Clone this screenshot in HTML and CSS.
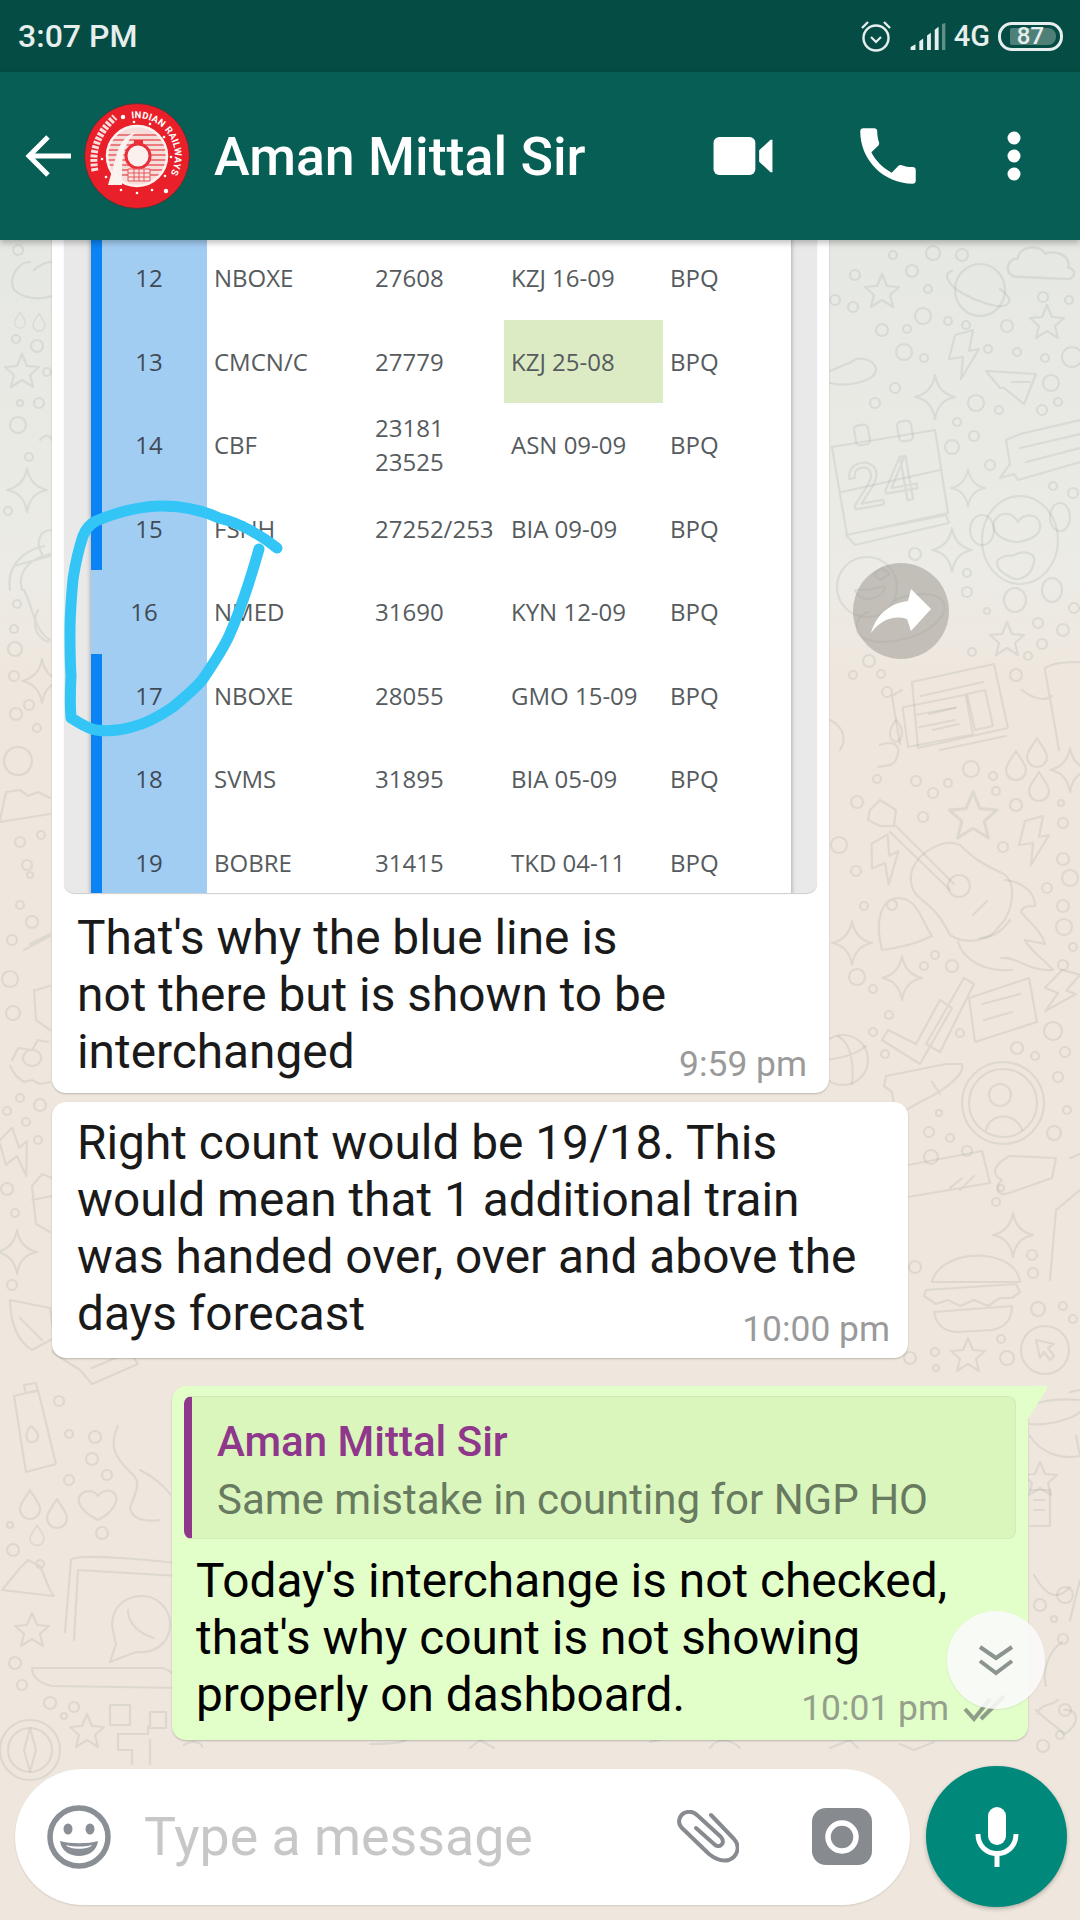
FILE: index.html
```html
<!DOCTYPE html>
<html lang="en">
<head>
<meta charset="utf-8">
<title>Aman Mittal Sir</title>
<link rel="stylesheet" href="styles.css">
</head>
<body>
<div class="screen">
  <div class="statusbar">
    <span class="clock">3:07 PM</span>
    <div class="status-icons">
      <svg class="ic-alarm" viewBox="0 0 34 34"><circle cx="17" cy="19" r="12.500" fill="none" stroke="#e6efed" stroke-width="2.400"/><path d="M12 18l5 5 5-5" fill="none" stroke="#e6efed" stroke-width="2.200"/><path d="M3 9l6-6M31 9l-6-6" stroke="#e6efed" stroke-width="2.400"/></svg>
      <svg class="ic-signal" viewBox="0 0 38 28"><path d="M1 28v-3l5-3v6zM10 28V19l4-3v12zM18 28V13l4-3v18zM26 28V7l4-3v24z" fill="#e6efed"/><path d="M33.500 28V1l3.500-1v28z" fill="#5f8f88"/></svg>
      <span class="net">4G</span>
      <div class="battery"><div class="battery-fill"></div><span class="battery-num">87</span></div>
    </div>
  </div>
  <header class="appbar">
    <svg class="ic-back" viewBox="0 0 48 48"><path d="M47 24H6M24 5L5 24l19 19" fill="none" stroke="#fff" stroke-width="5"/></svg>
    <svg class="avatar" viewBox="0 0 106 106">
      <circle cx="53" cy="53" r="52.500" fill="#e9202a" stroke="#3a3a3a" stroke-width="0.800"/>
      <circle cx="53" cy="53" r="30" fill="#f6dfda"/>
      <g stroke="#ea5c62" stroke-width="1.300"><path d="M33 32h40M28 37h50M25 42h56M24 47h58M24 52h58M24 57h58M25 62h56M27 67h52M31 72h44"/></g>
      <circle cx="53" cy="53" r="30" fill="none" stroke="#fbf3ef" stroke-width="2.500"/>
      <path d="M52 29C42 32 36 40 33 50L24 82 38 82 38 66C38 50 42 38 52 29Z" fill="#fbf3ef"/>
      <path d="M50 37h9v5h-9z" fill="#e9303a"/>
      <circle cx="54" cy="53" r="12" fill="#fbf0ee" stroke="#e9303a" stroke-width="3"/>
      <path d="M44 66h22v12H44zM44 70h22M44 74h22M50 66v12M55 66v12M60 66v12" fill="#f6e4e0" stroke="#e9545a" stroke-width="1"/>
      <path id="arc" d="M47.700 15.400A38 38 0 0 1 77.400 82.100" fill="none"/>
      <text class="avatar-text"><textPath href="#arc" textLength="83">INDIAN RAILWAYS</textPath></text>
      <g fill="#fff"><circle cx="39" cy="14" r="2.200"/><circle cx="82" cy="88" r="2.200"/><circle cx="53" cy="90" r="1.300"/><circle cx="37" cy="87" r="1.300"/><circle cx="68" cy="87" r="1.300"/><circle cx="22" cy="74" r="1.300"/><circle cx="18" cy="56" r="1.300"/><circle cx="50" cy="19" r="1.300"/><circle cx="66" cy="21" r="1.300"/><circle cx="80" cy="34" r="1.300"/><circle cx="87" cy="54" r="1.300"/><circle cx="81" cy="73" r="1.300"/></g>
      <path d="M11 68Q5 38 31 14" fill="none" stroke="#f8dfdd" stroke-width="7" stroke-dasharray="3 1.500"/>
    </svg>
    <h1 class="title">Aman Mittal Sir</h1>
    <div class="actions">
      <svg class="ic-video" viewBox="0 0 62 40"><rect x="0" y="0" width="44" height="40" rx="6" fill="#fff"/><path d="M48 14L60 3h2v34h-2L48 26z" fill="#fff"/></svg>
      <svg class="ic-call" viewBox="0 0 24 24"><path d="M6.600 10.800c1.400 2.800 3.800 5.100 6.600 6.600l2.200-2.200c.3-.3.700-.4 1-.2 1.100.4 2.300.6 3.600.6.600 0 1 .4 1 1V20c0 .6-.4 1-1 1C10.600 21 3 13.400 3 4c0-.6.400-1 1-1h3.500c.6 0 1 .4 1 1 0 1.300.2 2.500.6 3.600.1.300 0 .7-.2 1z" fill="#fff"/></svg>
      <svg class="ic-more" viewBox="0 0 14 50"><circle cx="7" cy="7" r="6.500" fill="#fff"/><circle cx="7" cy="25" r="6.500" fill="#fff"/><circle cx="7" cy="43" r="6.500" fill="#fff"/></svg>
    </div>
  </header>
  <main class="chat">
    <svg class="wallpaper" viewBox="0 240 1080 1680">
      <defs>
        <path id="s5" d="M0-18L5-6 17-5 8 3 11 15 0 8-11 15-8 3-17-5-5-6Z"/>
        <path id="s4" d="M0-22Q3-4 20 0 3 3 0 22-3 3-20 0-3-4 0-22Z"/>
        <path id="bolt" d="M-8-22L10-27 6-6 16-8-2 22 0 0-14 2Z"/>
        <path id="drop" d="M0-14C6-4 10 0 10 5A10 10 0 0 1-10 5C-10 0-6-4 0-14Z"/>
        <path id="cloud" d="M-24 12C-34 10-32-4-22-4-20-16-2-16 2-8 12-12 24-6 22 4 30 6 28 14 20 14Z"/>
        <g id="note"><path d="M-36-14L34-28 42 16-30 30Z"/><path d="M-20-6L24-14M-18 8L22 0"/></g>
      </defs>
      <g class="doodle">
        <ellipse cx="980" cy="290" rx="25" ry="26"/><path d="M952 271c-10 2-4 14 10 22s36 16 44 12c8-4 0-12-6-16"/>
        <use href="#s5" x="882" y="292"/><use href="#s5" x="1047" y="323"/>
        <use href="#cloud" transform="translate(1043 263) scale(1.150)"/>
        <path d="M830 371c8-3 14-7 20-8 8-8 24-4 26 6 0 8-10 12-20 14-8 2-18 2-26 0"/>
        <use href="#bolt" x="963" y="357"/>
        <path d="M986 371l50 3-12 30-20-16-4 0zM1012 382l18 0"/>
        <use href="#s4" x="935" y="397"/><use href="#s4" x="968" y="488" transform="translate(968 488) scale(.85) translate(-968 -488)"/><use href="#s4" x="952" y="550"/>
        <path d="M832 447l103-17 13 83-101 22ZM846 535l100-20 3 8-94 22zM842 492l98-22"/>
        <rect x="855" y="425" width="14" height="20" rx="4" transform="rotate(-10 862 435)"/><rect x="898" y="421" width="14" height="20" rx="4" transform="rotate(-10 905 431)"/>
        <text class="doodle-num" x="852" y="510" transform="rotate(-10 852 510)">24</text>
        <path d="M1080 420l-60 14-14 6 4 24-10 14 14-4 4 6 62-18M1020 448l60-14M1026 462l54-14"/>
        <ellipse cx="1020" cy="540" rx="38" ry="44"/><ellipse cx="982" cy="530" rx="12" ry="15"/><ellipse cx="1060" cy="517" rx="10" ry="14"/>
        <path d="M994 522c6-12 18-10 24 0 6-10 20-8 22 2 2 10-8 16-22 18-12 0-28-8-24-20z"/>
        <path d="M998 560c8-8 16-2 18-6 10-4 20 0 18 8-2 12-12 20-22 16-8-4-18-10-14-18z"/>
        <ellipse cx="1015" cy="600" rx="11" ry="12"/><ellipse cx="1052" cy="590" rx="10" ry="12"/>
        <circle cx="867" cy="587" r="30"/><path d="M880 580l-6-6 8-6 8 6zM855 590c10 0 24-2 30-4 0 12-24 20-30 4z"/>
        <path d="M895 600c20-8 44-8 48 2 8 14-18 34-44 38-26 6-44-2-42-14 0-8 8-14 12-14M912 622l10-6M900 610l10-4"/>
        <use href="#s5" x="1007" y="640"/>
        <path d="M1045 668c10-6 24-6 35-6M1045 670l14 80M1022 690c10 8 22 12 30 6"/>
        <path d="M912 682l82-18 14 64-90 20zM921 696l62-14M929 714l26-6M933 730l26-6M967 694l18-4 8 36-18 4zM940 750l66-14"/>
        <path d="M902 690l-10 6 8 48"/>
        <path d="M830 720c12 6 18 18 10 30M880 745c10-4 20-2 18 8-2 14-10 12-20 14M896 720c-8 10-8 20 0 22 8-2 8-14 0-22z"/>
        <use href="#drop" x="1016" y="765"/><use href="#drop" x="1037" y="752"/><use href="#drop" x="1039" y="786"/>
        <use href="#note" transform="translate(935 720) scale(.9)"/>
        <use href="#s4" x="1070" y="770"/>
        <path d="M870 810l10-10 16 10-2 16-14 0-12-6zM896 826l58 58M890 832l60 58"/>
        <path d="M912 870C920 850 945 838 960 845 975 860 985 865 1000 872 1020 880 1012 915 1000 925 990 942 965 945 950 935 935 905 925 905 915 893 910 885 910 877 912 870Z"/>
        <circle cx="959" cy="886" r="11"/><path d="M973 915l14-14"/>
        <path d="M1005 880c20 2 30 14 30 26-8 0-12 0-14 6 8 10 20 18 24 32l-20-4c4 10 20 20 28 30-24 2-36-14-52-12M1010 920c-10 14-20 18-30 18M958 942c6 20 30 30 54 28"/>
        <use href="#s5" x="973" y="817" transform="translate(973 817) scale(1.400) translate(-973 -817)"/>
        <use href="#bolt" x="1033" y="843"/><use href="#bolt" x="885" y="863" transform="rotate(-15 885 863)"/><use href="#bolt" x="1058" y="993" transform="rotate(30 1058 993)"/>
        <path d="M882 950c-8-30 0-52 16-52 20 0 24 24 34 38-16 8-34 12-50 14zM892 900a5 5 0 1 0 .1 0"/>
        <use href="#s4" x="852" y="943"/><use href="#s4" x="902" y="978"/>
        <path d="M888 1030l28 14 24-44 12 8-32 56-38-24ZM926 1044l14 8 34-68-10-6Z"/>
        <path d="M969 998l60-20 8 44-62 20ZM982 1004l38-10M984 1020l28-8"/>
        <circle cx="843" cy="1060" r="25"/><path d="M820 1060c14 0 34-4 46-14M838 1036c14 8 16 30 14 48"/>
        <path d="M886 1076l60-12 16 0c4 12-24 30-42 38l-24 14-4-24-8-6zM932 1082l8 12"/>
        <circle cx="1003" cy="1103" r="41"/><circle cx="1003" cy="1103" r="34"/><circle cx="1000" cy="1095" r="11"/><path d="M986 1130c4-18 30-18 36 0"/>
        <path d="M908 1165l74-14 8 32-82 14M950 1188l12-10M960 1190l14-14"/>
        <path d="M1010 1156c-16 8-20 18-8 24-10 8-4 18 10 12l40-14 4-20z"/><path d="M1070 1158l10-4M1050 1280l6-70 24-20"/>
        <use href="#s4" x="1013" y="1235"/>
        <path d="M932 1282c4-18 28-28 52-26 22 2 34 12 36 26zM926 1290l90-6 4 8-8 6-12 0-12 8-14-6-14 6-12-6-12 4-12-8zM934 1312l78-6c0 14-8 22-20 24l-34 2c-14 0-22-8-24-20z"/>
        <use href="#s5" x="968" y="1356"/>
        <circle cx="1045" cy="1350" r="24"/><path d="M1036 1340l18 4-6 4 6 8-4 4-6-8-4 6z"/>
        <path d="M1030 1406c20-10 44-6 50-6M1030 1424c20 2 44-6 50-12M1030 1436c10 16 30 24 50 20l-4-20M1070 1392l10-2"/>
        <path d="M1030 1490l20 0 0 36-20 0M1034 1500l10 0M1034 1510l10 0"/>
        <use href="#s5" x="1040" y="1480"/>
        <path d="M1062 1642c-14 10-20 30-16 44M1058 1700c-6 6-20 4-20 14M1036 1710c10 10 20 16 28 24 16-8 16-26 0-24"/>
        <path d="M1034 1575c8 14 20 30 36 12M1080 1580l-10 40"/>
        <path d="M30 262C18 262 8 278 14 290 30 304 52 296 52 296M52 262c-10 0-18 8-18 8"/>
        <use href="#drop" x="20" y="320" transform="translate(20 320) scale(.55) translate(-20 -320)"/><use href="#drop" x="39" y="322" transform="translate(39 322) scale(.6) translate(-39 -322)"/>
        <use href="#s5" x="22" y="372"/>
        <path d="M40 440c8-10 12 0 12 0"/>
        <use href="#s4" x="27" y="490"/>
        <path d="M10 590c-4-24 14-40 34-44M14 566l36-10M22 590c-4-14 2-30 28-36M52 530c-14 0-16 14-10 24M24 590c10 20 10 40 26 50M38 610c-6 12-4 26 10 32"/>
        <use href="#s4" x="42" y="681"/>
        <circle cx="18" cy="761" r="14"/><path d="M0 820l6-28 14-2 8 6 10-4 12 6M0 822l50-8"/>
        <path d="M24 950l26-14M30 944l20-10"/><path d="M36 990l14-4M34 990l2 30 14 10"/>
        <path d="M12 1060l6-12 14 2 6-10 10 2M10 1066l6 10 8 6 8-2 8 4 10-2M32 1050a9 8 0 1 0 .1 0"/>
        <use href="#bolt" x="17" y="1156" transform="rotate(-30 17 1156)"/>
        <path d="M32 1186l10-12 10 4M32 1186l4 38 14 8M32 1200l20-4"/>
        <use href="#s4" x="17" y="1252"/>
        <path d="M10 1300l40 8 4 30-22 12c-14-8-22-28-22-50zM20 1318l22 22"/>
        <path d="M52 1352l58-28 28 40-46 20-12-14zM84 1354l30-14M92 1368l28-12"/>
        <path d="M14 1396l24-6 18 74-30 8zM24 1385l12-2 2 8-12 2zM31 1426c-8 8-4 18 2 16 8-2 6-10-2-16z"/>
        <use href="#drop" x="30" y="1504"/><use href="#drop" x="57" y="1513"/><use href="#drop" x="37" y="1535" transform="translate(37 1535) scale(.7) translate(-37 -1535)"/>
        <path d="M98 1520c-20-10-24-22-14-28 6-2 12 0 14 4 4-6 14-8 18 0 2 8-6 18-18 24z"/>
        <path d="M118 1426c-10 20-2 32 12 46 14 10 4 22 0 36 2 12 16 14 30 12M140 1470c20 10 30 24 30 24"/>
        <path d="M2 1590l18-22 8-8 12 6 10 24 4 6zM40 1560a4 4 0 1 0 .1 0"/>
        <use href="#s5" x="32" y="1631"/>
        <path d="M65 1632l6-72c4-8 100 2 110 4M74 1640l4-70 100 6M32 1668l130 0c10 2 20 14 20 20l-130-2c-10-2-20-8-20-18z"/>
        <path d="M112 1626c0-22 16-30 30-30s30 12 28 32c-2 16-16 26-34 24l-26 10 6-18z"/><path d="M128 1610c0 14 12 24 26 28"/>
        <circle cx="30" cy="1750" r="30"/><circle cx="30" cy="1750" r="22"/><path d="M30 1728l6 22-6 22-6-22z"/>
        <use href="#s5" x="87" y="1732"/>
        <path d="M110 1705h20v20h-20zM150 1712h16v16h-16zM118 1750v-16h30v-8M118 1750h14v14M150 1740v24"/>
        <path d="M184 1745c8-6 18-2 18 2M370 1744c10 0 30 0 36-4M470 1748l10-8 14 8M650 1742l34-8M710 1748c6-10 20-10 30 0M830 1748l20-8 8 8M900 1744l14 6 20-8"/>
      </g>
      <g class="dots">
        <circle cx="893" cy="255" r="4"/><circle cx="933" cy="253" r="7"/><circle cx="962" cy="255" r="6"/><circle cx="855" cy="275" r="5"/><circle cx="912" cy="271" r="6"/><circle cx="928" cy="289" r="4"/><circle cx="835" cy="300" r="5"/><circle cx="853" cy="307" r="5"/><circle cx="923" cy="316" r="8"/><circle cx="948" cy="321" r="4"/><circle cx="966" cy="325" r="4"/><circle cx="882" cy="330" r="6"/><circle cx="907" cy="329" r="4"/><circle cx="1007" cy="326" r="6"/><circle cx="1043" cy="297" r="5"/><circle cx="1069" cy="300" r="4"/><circle cx="988" cy="349" r="4"/><circle cx="1017" cy="352" r="4"/><circle cx="1045" cy="358" r="4"/><circle cx="904" cy="352" r="8"/><circle cx="924" cy="358" r="4"/><circle cx="1072" cy="357" r="10"/><circle cx="1051" cy="383" r="8"/><circle cx="895" cy="388" r="5"/><circle cx="875" cy="403" r="5"/><circle cx="976" cy="403" r="8"/><circle cx="999" cy="410" r="4"/><circle cx="1058" cy="402" r="4"/><circle cx="1042" cy="410" r="5"/><circle cx="957" cy="422" r="4"/><circle cx="974" cy="436" r="5"/><circle cx="952" cy="447" r="7"/><circle cx="990" cy="465" r="5"/><circle cx="1053" cy="486" r="4"/><circle cx="1073" cy="493" r="5"/><circle cx="915" cy="554" r="6"/><circle cx="967" cy="573" r="4"/><circle cx="967" cy="592" r="5"/><circle cx="987" cy="611" r="3"/><circle cx="1074" cy="608" r="5"/><circle cx="1038" cy="623" r="5"/><circle cx="1063" cy="630" r="6"/><circle cx="1042" cy="644" r="5"/><circle cx="1028" cy="656" r="4"/><circle cx="972" cy="652" r="4"/><circle cx="1016" cy="675" r="6"/><circle cx="869" cy="661" r="6"/><circle cx="853" cy="675" r="4"/><circle cx="881" cy="674" r="4"/><circle cx="887" cy="692" r="5"/>
        <circle cx="877" cy="779" r="4"/><circle cx="916" cy="781" r="5"/><circle cx="948" cy="783" r="4"/><circle cx="971" cy="769" r="8"/><circle cx="993" cy="776" r="4"/><circle cx="996" cy="791" r="4"/><circle cx="933" cy="793" r="5"/><circle cx="857" cy="802" r="6"/><circle cx="1016" cy="805" r="6"/><circle cx="1061" cy="803" r="3"/><circle cx="923" cy="817" r="5"/><circle cx="1063" cy="823" r="5"/><circle cx="1003" cy="847" r="5"/><circle cx="839" cy="845" r="8"/><circle cx="856" cy="871" r="5"/><circle cx="1063" cy="859" r="6"/><circle cx="1070" cy="878" r="8"/><circle cx="1047" cy="888" r="5"/><circle cx="864" cy="906" r="4"/><circle cx="1063" cy="906" r="6"/><circle cx="1064" cy="927" r="8"/><circle cx="1073" cy="947" r="4"/><circle cx="1063" cy="965" r="5"/><circle cx="935" cy="955" r="4"/><circle cx="924" cy="966" r="4"/><circle cx="952" cy="966" r="6"/><circle cx="857" cy="977" r="8"/><circle cx="873" cy="989" r="4"/><circle cx="889" cy="1015" r="4"/><circle cx="873" cy="1032" r="4"/><circle cx="960" cy="1033" r="4"/><circle cx="1053" cy="1031" r="9"/><circle cx="885" cy="1054" r="4"/><circle cx="1017" cy="1048" r="6"/><circle cx="1035" cy="1056" r="4"/><circle cx="1065" cy="1052" r="5"/><circle cx="1058" cy="1077" r="5"/><circle cx="1067" cy="1110" r="4"/><circle cx="939" cy="1113" r="3"/><circle cx="929" cy="1132" r="5"/><circle cx="1054" cy="1133" r="7"/>
        <circle cx="950" cy="1138" r="4"/><circle cx="931" cy="1157" r="7"/><circle cx="967" cy="1151" r="5"/><circle cx="1001" cy="1188" r="3"/><circle cx="996" cy="1202" r="4"/><circle cx="915" cy="1267" r="6"/><circle cx="1032" cy="1255" r="5"/><circle cx="1033" cy="1273" r="5"/><circle cx="1038" cy="1309" r="7"/><circle cx="1063" cy="1306" r="4"/><circle cx="1073" cy="1319" r="4"/><circle cx="1001" cy="1339" r="4"/><circle cx="1007" cy="1358" r="7"/><circle cx="935" cy="1352" r="4"/><circle cx="936" cy="1368" r="3"/><circle cx="910" cy="1358" r="6"/><circle cx="1040" cy="1605" r="6"/><circle cx="1065" cy="1595" r="8"/><circle cx="1054" cy="1619" r="3"/><circle cx="1063" cy="1639" r="5"/><circle cx="1065" cy="1710" r="6"/><circle cx="1060" cy="1735" r="4"/><circle cx="1043" cy="1746" r="6"/>
        <circle cx="18" cy="250" r="5"/><circle cx="16" cy="339" r="4"/><circle cx="37" cy="346" r="6"/><circle cx="47" cy="372" r="4"/><circle cx="20" cy="403" r="3"/><circle cx="39" cy="403" r="5"/><circle cx="18" cy="425" r="8"/><circle cx="29" cy="457" r="4"/><circle cx="8" cy="511" r="4"/><circle cx="17" cy="604" r="4"/><circle cx="14" cy="629" r="4"/><circle cx="15" cy="649" r="7"/><circle cx="14" cy="676" r="5"/><circle cx="16" cy="714" r="6"/><circle cx="29" cy="705" r="5"/><circle cx="37" cy="728" r="4"/><circle cx="20" cy="842" r="5"/><circle cx="41" cy="835" r="4"/><circle cx="27" cy="865" r="5"/><circle cx="30" cy="875" r="3"/><circle cx="20" cy="905" r="4"/><circle cx="32" cy="922" r="6"/><circle cx="12" cy="940" r="5"/><circle cx="10" cy="979" r="8"/><circle cx="13" cy="1013" r="7"/>
        <circle cx="7" cy="1111" r="4"/><circle cx="20" cy="1098" r="4"/><circle cx="40" cy="1105" r="6"/><circle cx="26" cy="1122" r="4"/><circle cx="38" cy="1140" r="4"/><circle cx="7" cy="1189" r="6"/><circle cx="15" cy="1213" r="4"/><circle cx="12" cy="1285" r="5"/><circle cx="59" cy="1401" r="5"/><circle cx="69" cy="1434" r="4"/><circle cx="95" cy="1437" r="6"/><circle cx="92" cy="1459" r="6"/><circle cx="107" cy="1475" r="5"/><circle cx="69" cy="1480" r="5"/><circle cx="10" cy="1525" r="3"/><circle cx="13" cy="1550" r="6"/><circle cx="102" cy="1533" r="6"/><circle cx="22" cy="1685" r="5"/><circle cx="15" cy="1663" r="6"/><circle cx="50" cy="1703" r="6"/><circle cx="64" cy="1716" r="3"/><circle cx="74" cy="1707" r="5"/>
      </g>
    </svg>
    <div class="thread">
      <article class="bubble in bubble-image">
        <div class="shot">
          <div class="shot-page">
            <div class="row"><span class="num">12</span><span>NBOXE</span><span>27608</span><span>KZJ 16-09</span><span>BPQ</span></div>
            <div class="row"><span class="num">13</span><span>CMCN/C</span><span>27779</span><span class="hl">KZJ 25-08</span><span>BPQ</span></div>
            <div class="row"><span class="num">14</span><span>CBF</span><span class="two">23181<br>23525</span><span>ASN 09-09</span><span>BPQ</span></div>
            <div class="row"><span class="num">15</span><span>FSNH</span><span>27252/253</span><span>BIA 09-09</span><span>BPQ</span></div>
            <div class="row gap"><span class="num">16</span><span>NMED</span><span>31690</span><span>KYN 12-09</span><span>BPQ</span></div>
            <div class="row"><span class="num">17</span><span>NBOXE</span><span>28055</span><span>GMO 15-09</span><span>BPQ</span></div>
            <div class="row"><span class="num">18</span><span>SVMS</span><span>31895</span><span>BIA 05-09</span><span>BPQ</span></div>
            <div class="row"><span class="num">19</span><span>BOBRE</span><span>31415</span><span>TKD 04-11</span><span>BPQ</span></div>
          </div>
          <svg class="ink" viewBox="64 392 400 500"><path d="M277 547C262 535 240 522 219 517 200 508 180 505 162 505 140 505 115 512 96 520 88 524 85 530 83 535 78 550 75 565 73 578 71 600 70 615 70 630 70 650 70 660 71 674 70 695 70 705 71 717 80 722 88 728 96 729 110 731 122 729 132 726 148 722 160 715 173 706 185 696 195 688 203 678 215 660 222 650 229 635 240 610 250 580 259 548" fill="none" stroke="#34c5f7" stroke-width="11" stroke-linecap="round" stroke-linejoin="round"/></svg>
        </div>
        <p class="msg">That's why the blue line is<br>not there but is shown to be<br>interchanged</p>
        <time class="stamp">9:59 pm</time>
      </article>
      <article class="bubble in bubble-two">
        <p class="msg">Right count would be 19/18. This<br>would mean that 1 additional train<br>was handed over, over and above the<br>days forecast</p>
        <time class="stamp">10:00 pm</time>
      </article>
      <article class="bubble out">
        <div class="quote">
          <div class="quote-name">Aman Mittal Sir</div>
          <div class="quote-text">Same mistake in counting for NGP HO</div>
        </div>
        <p class="msg msg-out">Today's interchange is not checked,<br>that's why count is not showing<br>properly on dashboard.</p>
        <time class="stamp stamp-out">10:01 pm <svg class="ticks" viewBox="0 0 44 28"><path d="M2 15l9 10L27 5M18 25L41 2" fill="none" stroke="#8f9c88" stroke-width="4"/></svg></time>
        <svg class="tail" viewBox="0 0 20 33"><path d="M0 0H17Q21 0 19 3L0 33z" fill="#e2fec9"/></svg>
      </article>
    </div>
    <div class="forward"><svg viewBox="0 0 60 44"><path d="M40 0L60 20 40 42 36 30C24 26 10 30 0 44 6 24 20 14 37 12Z" fill="#fff"/></svg></div>
    <div class="jump"><svg viewBox="0 0 36 34"><path d="M2 4l16 11L34 4M2 18l16 12 16-12" fill="none" stroke="#8c9490" stroke-width="4"/></svg></div>
    <div class="composer">
      <div class="inputbar">
        <svg class="ic-emoji" viewBox="0 0 64 64"><circle cx="32" cy="32" r="29" fill="none" stroke="#8a8f96" stroke-width="5.500"/><ellipse cx="21" cy="24" rx="4.500" ry="5.500" fill="#8a8f96"/><ellipse cx="43" cy="24" rx="4.500" ry="5.500" fill="#8a8f96"/><path d="M13 36c10 3 28 3 38 0-2 20-36 20-38 0z" fill="#8a8f96"/><path d="M19 40c8 2 18 2 26 0-3 5-23 5-26 0z" fill="#fff"/></svg>
        <span class="placeholder">Type a message</span>
        <svg class="ic-clip" viewBox="0 0 62 53"><path d="M34 5L57 29C64 37 60 47 52 50 44 52 37 48 32 44L5 18C0 13 2 6 7 3 12 1 17 2 20 5L44 27C47 31 46 34 44 35 42 37 39 36 37 34L19 18" fill="none" stroke="#878b90" stroke-width="4" stroke-linecap="round" stroke-linejoin="round"/></svg>
        <svg class="ic-cam" viewBox="0 0 60 57"><rect width="60" height="57" rx="14" fill="#878b90"/><circle cx="30" cy="29" r="14" fill="none" stroke="#fff" stroke-width="5.500"/></svg>
      </div>
      <button class="mic" type="button"><svg viewBox="0 0 44 60"><rect x="13" y="0" width="18" height="38" rx="9" fill="#fff"/><path d="M3 27c0 26 38 26 38 0" fill="none" stroke="#fff" stroke-width="5"/><rect x="19.500" y="44" width="5" height="16" fill="#fff"/></svg></button>
    </div>
  </main>
</div>
</body>
</html>
```
FILE: styles.css
```css
* { box-sizing: border-box; }
html, body { margin: 0; padding: 0; }
body { width: 1080px; height: 1920px; overflow: hidden; font-family: Roboto, "Noto Sans", sans-serif; background: #efe7dd; }
.screen { width: 1080px; height: 1920px; display: flex; flex-direction: column; overflow: hidden; }
.statusbar { height: 72px; flex: none; background: #054d44; display: flex; align-items: center; justify-content: space-between; padding: 0 17px 0 18px; color: #e6efed; }
.clock { font-size: 32px; font-weight: 500; }
.status-icons { display: flex; align-items: center; }
.ic-alarm { width: 34px; height: 34px; }
.ic-signal { width: 38px; height: 27px; margin-left: 16px; }
.net { font-size: 29px; font-weight: 500; margin-left: 7px; }
.battery { width: 65px; height: 29px; border: 3px solid #e6efed; border-radius: 14px; position: relative; display: flex; align-items: center; justify-content: center; padding: 3px; margin-left: 8px; }
.battery-fill { position: absolute; left: 9px; top: 3px; bottom: 3px; width: 46px; border-radius: 2px 8px 8px 2px; background: #4f8078; }
.battery-num { position: relative; font-size: 24px; font-weight: 500; }
.appbar { height: 168px; flex: none; background: #075e55; display: flex; align-items: center; position: relative; z-index: 3; box-shadow: 0 3px 6px rgba(0,0,0,.25); padding: 0 0 0 24px; }
.ic-back { width: 48px; height: 48px; flex: none; }
.avatar { width: 106px; height: 106px; flex: none; margin-left: 12px; }
.avatar-text { font: 700 9.500px Roboto, sans-serif; fill: #fff; }
.title { margin: 0 0 0 24px; font-size: 53.700px; font-weight: 500; color: #fff; white-space: nowrap; flex: 1; }
.actions { display: flex; align-items: center; padding-right: 59px; }
.ic-video { width: 62px; height: 38px; }
.ic-call { width: 74px; height: 74px; margin-left: 77px; }
.ic-more { width: 14px; height: 50px; margin-left: 82px; }
.chat { flex: 1; position: relative; overflow: hidden; background: linear-gradient(180deg, #e6e8e3 0, #ecebe5 20%, #efe7de 26%, #efe7dd 100%); }
.wallpaper { position: absolute; left: 0; top: 0; width: 1080px; height: 1680px; }
.doodle, .dots { fill: none; stroke: rgba(150,160,155,.2); stroke-width: 2.200; stroke-linejoin: round; stroke-linecap: round; }
.doodle-num { font: 400 62px Roboto, sans-serif; }
.thread { position: absolute; left: 0; right: 0; bottom: 180px; display: flex; flex-direction: column; align-items: flex-start; gap: 9px; }
.bubble { position: relative; background: #fff; border-radius: 14px; box-shadow: 0 1px 2px rgba(0,0,0,.22); margin-left: 52px; }
.bubble-image { width: 777px; padding: 0 12px 0; height: 900px; display: flex; flex-direction: column; justify-content: flex-end; }
.bubble-two { width: 856px; height: 256px; padding: 13px 25px; }
.msg { margin: 0; font-size: 47.800px; line-height: 57px; color: #1a1a1a; white-space: nowrap; }
.bubble-image .msg { padding: 17px 13px 12px; }
.stamp { position: absolute; right: 22px; bottom: 8px; color: #9a9a9a; font-size: 35.400px; white-space: nowrap; display: flex; align-items: center; }
.bubble-two .stamp { right: 18px; }
.shot { position: relative; flex: 1; min-height: 0; overflow: hidden; border-radius: 0 0 10px 10px; background: #e9e9e9; box-shadow: 0 1px 1px rgba(0,0,0,.2); display: flex; flex-direction: column; justify-content: flex-end; }
.shot-page { width: 700px; margin-left: 27px; margin-bottom: -11px; background: #fff; font-family: "Open Sans", sans-serif; font-size: 24px; color: #565b5e; box-shadow: 0 0 5px rgba(0,0,0,.35); }
.row { display: grid; grid-template-columns: 116px 161px 136px 159px 1fr; height: 83.500px; align-items: center; background: linear-gradient(90deg, #0a84f5 0 11px, #a2cdf3 11px 116px, transparent 116px); }
.row.gap { background: linear-gradient(90deg, #a2cdf3 0 116px, transparent 116px); }
.row > span { padding-left: 7px; white-space: nowrap; }
.row > .num { padding-left: 0; padding-right: 0; text-align: center; color: #3f4a55; }
.row.gap > .num { padding-right: 10px; }
.hl { background: #dcebc4; align-self: stretch; display: flex; align-items: center; }
.two { line-height: 34px; }
.ink { position: absolute; left: 0; bottom: 0; width: 400px; height: 500px; }
.out { background: #e2fec9; margin-left: 172px; width: 856px; height: 354px; padding: 10px 12px 0 12px; border-radius: 14px 0 14px 14px; margin-top: 19px; }
.tail { position: absolute; right: -20px; top: 0; width: 20px; height: 33px; }
.quote { height: 143px; border-radius: 8px; background: #daf6bc; border: 1px solid #d2ecb6; border-left: 8px solid #8e378b; padding: 22px 25px; }
.quote-name { font-size: 42px; line-height: 46px; font-weight: 500; color: #8e378b; }
.quote-text { font-size: 42px; line-height: 46px; margin-top: 12px; color: #687a5f; white-space: nowrap; }
.msg-out { color: #000; padding: 14px 12px; }
.stamp-out { color: #95a08c; right: 21px; bottom: 11px; gap: 14px; }
.ticks { width: 44px; height: 28px; }
.forward { position: absolute; left: 853px; top: 323px; width: 96px; height: 96px; border-radius: 50%; background: rgba(160,155,150,.55); display: flex; align-items: center; justify-content: center; }
.forward svg { width: 60px; height: 44px; }
.jump { position: absolute; left: 947px; top: 1371px; width: 98px; height: 98px; border-radius: 50%; background: rgba(250,250,250,.9); display: flex; align-items: center; justify-content: center; box-shadow: 0 1px 2px rgba(0,0,0,.08); }
.jump svg { width: 36px; height: 34px; }
.composer { position: absolute; left: 15px; right: 13px; bottom: 13px; display: flex; align-items: center; justify-content: space-between; }
.inputbar { width: 895px; height: 136px; border-radius: 68px; background: #fff; display: flex; align-items: center; padding: 0 38px 0 32px; box-shadow: 0 1px 2px rgba(0,0,0,.12); }
.ic-emoji { width: 64px; height: 64px; flex: none; }
.placeholder { flex: 1; margin-left: 33px; font-size: 53.700px; color: #c7c7c7; white-space: nowrap; }
.ic-clip { width: 62px; height: 53px; flex: none; }
.ic-cam { width: 60px; height: 57px; flex: none; margin-left: 73px; }
.mic { width: 141px; height: 141px; border: 0; border-radius: 50%; background: #00897b; padding: 0; display: flex; align-items: center; justify-content: center; box-shadow: 0 2px 4px rgba(0,0,0,.25); }
.mic svg { width: 44px; height: 60px; }
```
